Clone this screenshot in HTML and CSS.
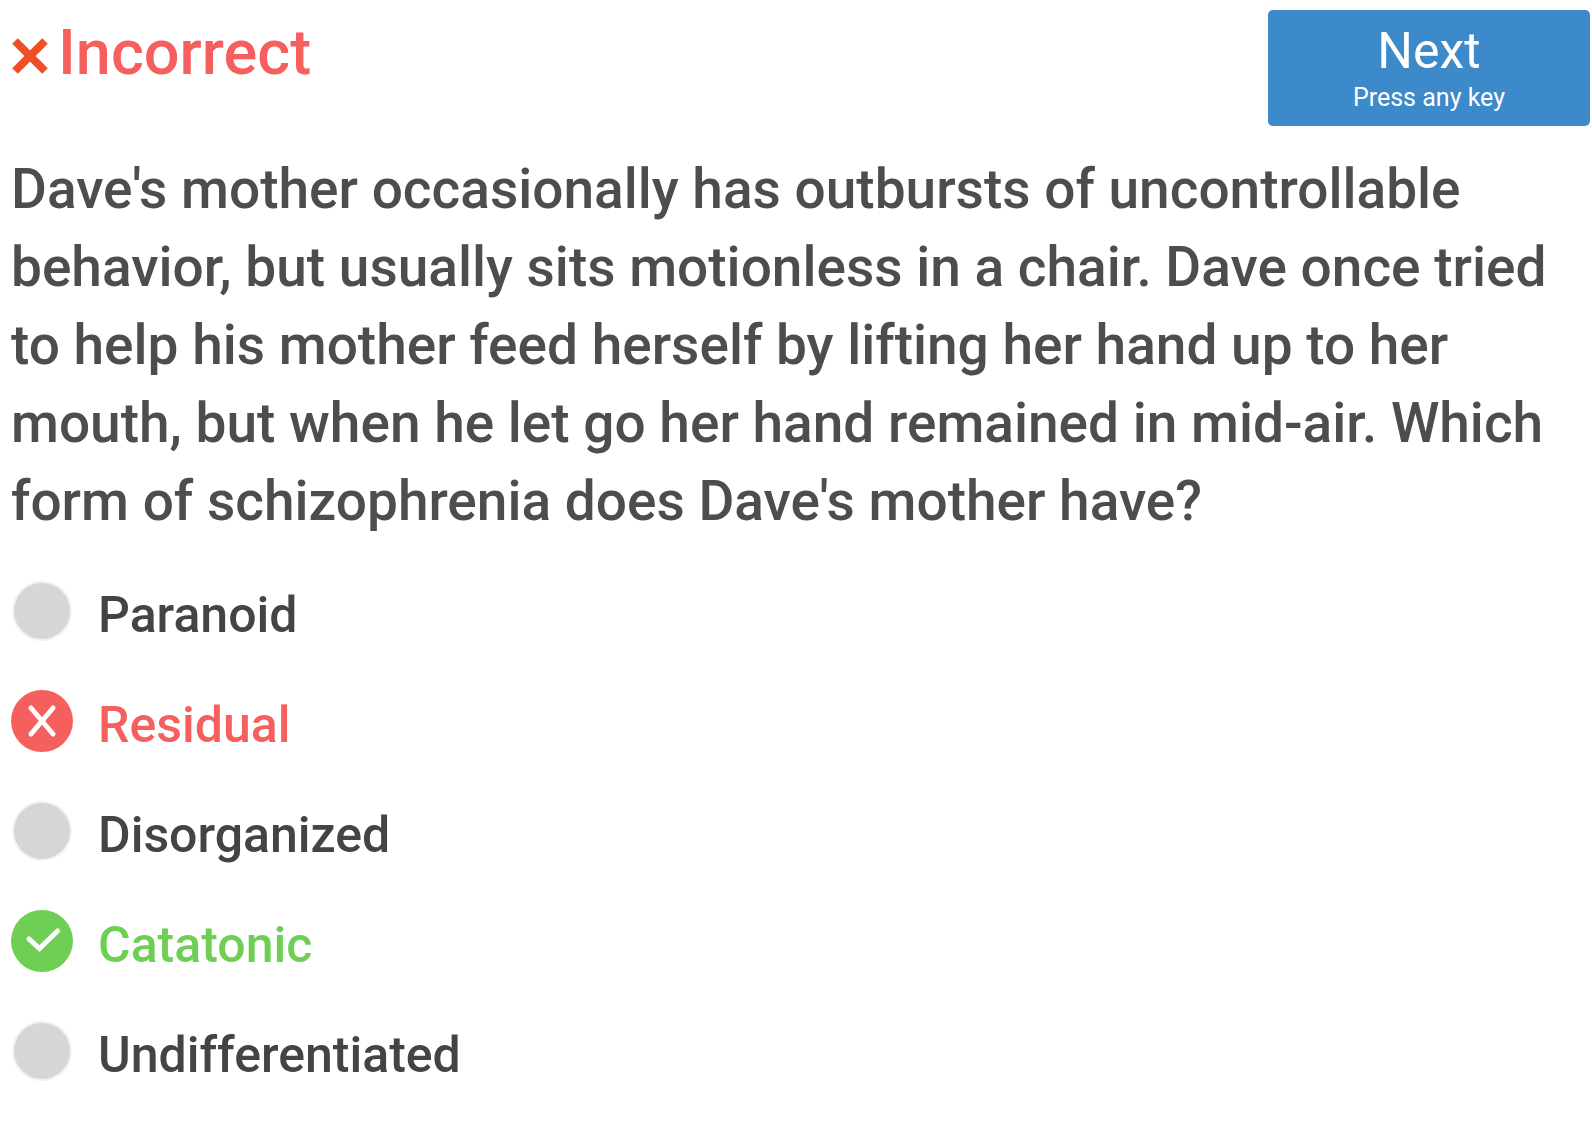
FILE: index.html
```
<!DOCTYPE html>
<html lang="en">
<head>
<meta charset="utf-8">
<title>Quiz question</title>
<link rel="stylesheet" href="styles.css">
</head>
<body>
<main class="quiz">
  <header class="quiz-header">
    <h1 class="result">
      <svg class="result-icon" viewBox="0 0 38 38" aria-hidden="true"><path d="M4 4 34 34M34 4 4 34"/></svg>
      Incorrect
    </h1>
    <button class="next" type="button">
      <span class="next-label">Next</span>
      <span class="next-hint">Press any key</span>
    </button>
  </header>
  <form class="quiz-body">
    <p class="question" id="question">Dave's mother occasionally has outbursts of uncontrollable behavior, but usually sits motionless in a chair. Dave once tried to help his mother feed herself by lifting her hand up to her mouth, but when he let go her hand remained in mid-air. Which form of schizophrenia does Dave's mother have?</p>
    <div class="options" role="radiogroup" aria-labelledby="question">
      <label class="option">
        <span class="mark"><input class="radio" type="radio" name="answer"></span>
        <span class="option-text">Paranoid</span>
      </label>
      <label class="option option-wrong">
        <span class="mark"><input class="radio" type="radio" name="answer" checked>
          <svg class="mark-icon" viewBox="0 0 62 62" aria-hidden="true"><path d="M20 18 42 44M42 18 20 44"/></svg></span>
        <span class="option-text">Residual</span>
      </label>
      <label class="option">
        <span class="mark"><input class="radio" type="radio" name="answer"></span>
        <span class="option-text">Disorganized</span>
      </label>
      <label class="option option-right">
        <span class="mark"><input class="radio" type="radio" name="answer">
          <svg class="mark-icon" viewBox="0 0 62 62" aria-hidden="true"><path d="M18 29 28.500 38.500 46.500 21"/></svg></span>
        <span class="option-text">Catatonic</span>
      </label>
      <label class="option">
        <span class="mark"><input class="radio" type="radio" name="answer"></span>
        <span class="option-text">Undifferentiated</span>
      </label>
    </div>
  </form>
</main>
</body>
</html>
```
FILE: styles.css
```
* {
  box-sizing: border-box;
}

body {
  margin: 0;
  background: #fff;
  color: #4d4d4d;
  font-family: Roboto, "Liberation Sans", sans-serif;
}

.quiz {
  padding: 10px 2px 40px 11px;
}

.quiz-header {
  display: flex;
  justify-content: space-between;
  align-items: flex-start;
}

.result {
  display: flex;
  align-items: center;
  gap: 9px;
  margin: 0;
  padding-top: 7px;
  color: #f5605f;
  font-size: 63px;
  font-weight: 500;
  line-height: 72px;
}

.result-icon {
  width: 38px;
  height: 38px;
  margin-top: 5px;
  fill: none;
  stroke: #ef4e26;
  stroke-width: 8;
}

.next {
  display: flex;
  flex-direction: column;
  align-items: center;
  width: 322px;
  padding: 11px;
  border: 0;
  border-radius: 5px;
  background: #3d8aca;
  color: #fff;
  font-family: inherit;
  cursor: pointer;
}

.next-label {
  font-size: 50px;
  line-height: 60px;
}

.next-hint {
  font-size: 25px;
  line-height: 34px;
}

.question {
  margin: 24px 0 40px;
  font-size: 55px;
  font-weight: 500;
  line-height: 78px;
}

.options {
  display: flex;
  flex-direction: column;
  align-items: flex-start;
  gap: 40px;
}

.option {
  display: flex;
  align-items: flex-start;
  gap: 25px;
  color: #444;
  font-size: 50px;
  font-weight: 500;
  line-height: 70px;
}

.mark {
  display: grid;
  flex: none;
  place-items: center;
  width: 62px;
  height: 62px;
}

.radio,
.mark-icon {
  grid-area: 1 / 1;
}

.radio {
  appearance: none;
  width: 60px;
  height: 60px;
  margin: 0;
  border: 2px solid #f2f2f2;
  border-radius: 50%;
  background: #d6d6d6;
}

.mark-icon {
  width: 62px;
  height: 62px;
  fill: none;
  stroke: #fff;
  stroke-width: 5;
  stroke-linecap: round;
}

.option-wrong {
  color: #f5605f;
}

.option-right {
  color: #6fcf55;
}

.option-wrong .radio,
.option-right .radio {
  width: 62px;
  height: 62px;
  border: 0;
  color: inherit;
  background: currentColor;
}
```
